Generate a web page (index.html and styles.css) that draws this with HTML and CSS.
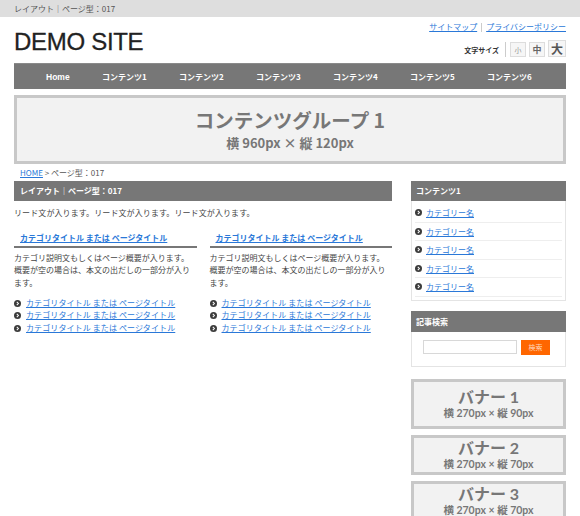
FILE: index.html
```html
<!DOCTYPE html>
<html lang="ja">
<head>
<meta charset="utf-8">
<title>DEMO SITE</title>
<link rel="stylesheet" href="styles.css">
</head>
<body>
<div class="topbar">レイアウト｜ページ型：017</div>

<header class="header">
  <h1 class="logo">DEMO SITE</h1>
  <div class="header-right">
    <div class="util-links">
      <a href="#">サイトマップ</a><span class="util-sep"></span><a href="#">プライバシーポリシー</a>
    </div>
    <div class="fontsize">
      <span class="fontsize-label">文字サイズ</span>
      <span class="fontsize-sep"></span>
      <span class="fs-btn fs-s">小</span>
      <span class="fs-btn fs-m">中</span>
      <span class="fs-btn fs-l">大</span>
    </div>
  </div>
</header>

<nav class="gnav">
  <a href="#">Home</a>
  <a href="#">コンテンツ1</a>
  <a href="#">コンテンツ2</a>
  <a href="#">コンテンツ3</a>
  <a href="#">コンテンツ4</a>
  <a href="#">コンテンツ5</a>
  <a href="#">コンテンツ6</a>
</nav>

<div class="hero">
  <div class="hero-title">コンテンツグループ 1</div>
  <div class="hero-sub">横 960px × 縦 120px</div>
</div>

<div class="breadcrumb"><a href="#">HOME</a> &gt; ページ型：017</div>

<div class="main">
  <div class="content">
    <h2 class="content-head">レイアウト｜ページ型：017</h2>
    <p class="lead">リード文が入ります。リード文が入ります。リード文が入ります。</p>
    <div class="cols">
      <div class="col">
        <h3 class="col-title"><a href="#">カテゴリタイトル または ページタイトル</a></h3>
        <p class="col-desc">カテゴリ説明文もしくはページ概要が入ります。概要が空の場合は、本文の出だしの一部分が入ります。</p>
        <ul class="col-list">
          <li><svg class="arrow" viewBox="0 0 8 8"><circle cx="4" cy="4" r="4"/><path d="M3.2 2.2 L5 4 L3.2 5.8"/></svg><a href="#">カテゴリタイトル または ページタイトル</a></li>
          <li><svg class="arrow" viewBox="0 0 8 8"><circle cx="4" cy="4" r="4"/><path d="M3.2 2.2 L5 4 L3.2 5.8"/></svg><a href="#">カテゴリタイトル または ページタイトル</a></li>
          <li><svg class="arrow" viewBox="0 0 8 8"><circle cx="4" cy="4" r="4"/><path d="M3.2 2.2 L5 4 L3.2 5.8"/></svg><a href="#">カテゴリタイトル または ページタイトル</a></li>
        </ul>
      </div>
      <div class="col">
        <h3 class="col-title"><a href="#">カテゴリタイトル または ページタイトル</a></h3>
        <p class="col-desc">カテゴリ説明文もしくはページ概要が入ります。概要が空の場合は、本文の出だしの一部分が入ります。</p>
        <ul class="col-list">
          <li><svg class="arrow" viewBox="0 0 8 8"><circle cx="4" cy="4" r="4"/><path d="M3.2 2.2 L5 4 L3.2 5.8"/></svg><a href="#">カテゴリタイトル または ページタイトル</a></li>
          <li><svg class="arrow" viewBox="0 0 8 8"><circle cx="4" cy="4" r="4"/><path d="M3.2 2.2 L5 4 L3.2 5.8"/></svg><a href="#">カテゴリタイトル または ページタイトル</a></li>
          <li><svg class="arrow" viewBox="0 0 8 8"><circle cx="4" cy="4" r="4"/><path d="M3.2 2.2 L5 4 L3.2 5.8"/></svg><a href="#">カテゴリタイトル または ページタイトル</a></li>
        </ul>
      </div>
    </div>
  </div>

  <aside class="sidebar">
    <div class="side-box">
      <h3 class="side-head">コンテンツ1</h3>
      <ul class="side-list">
        <li><svg class="arrow" viewBox="0 0 8 8"><circle cx="4" cy="4" r="4"/><path d="M3.2 2.2 L5 4 L3.2 5.8"/></svg><a href="#">カテゴリー名</a></li>
        <li><svg class="arrow" viewBox="0 0 8 8"><circle cx="4" cy="4" r="4"/><path d="M3.2 2.2 L5 4 L3.2 5.8"/></svg><a href="#">カテゴリー名</a></li>
        <li><svg class="arrow" viewBox="0 0 8 8"><circle cx="4" cy="4" r="4"/><path d="M3.2 2.2 L5 4 L3.2 5.8"/></svg><a href="#">カテゴリー名</a></li>
        <li><svg class="arrow" viewBox="0 0 8 8"><circle cx="4" cy="4" r="4"/><path d="M3.2 2.2 L5 4 L3.2 5.8"/></svg><a href="#">カテゴリー名</a></li>
        <li><svg class="arrow" viewBox="0 0 8 8"><circle cx="4" cy="4" r="4"/><path d="M3.2 2.2 L5 4 L3.2 5.8"/></svg><a href="#">カテゴリー名</a></li>
      </ul>
    </div>

    <div class="side-box search-box">
      <h3 class="side-head">記事検索</h3>
      <div class="search-body">
        <input class="search-input" type="text">
        <button class="search-btn">検索</button>
      </div>
    </div>

    <div class="banner banner-tall">
      <div class="banner-title">バナー 1</div>
      <div class="banner-sub">横 270px × 縦 90px</div>
    </div>
    <div class="banner">
      <div class="banner-title">バナー 2</div>
      <div class="banner-sub">横 270px × 縦 70px</div>
    </div>
    <div class="banner">
      <div class="banner-title">バナー 3</div>
      <div class="banner-sub">横 270px × 縦 70px</div>
    </div>
  </aside>
</div>
</body>
</html>
```
FILE: styles.css
```css
* { box-sizing: border-box; }
html, body { margin: 0; padding: 0; }
body {
  font-family: "Noto Sans CJK JP", "Noto Sans", sans-serif;
  font-size: 8px;
  color: #444;
  background: #fff;
  overflow: hidden;
}
a { color: #2a78d8; text-decoration: underline; }
h1, h2, h3, p, ul { margin: 0; padding: 0; }
ul { list-style: none; }

.topbar {
  height: 17px;
  line-height: 17px;
  background: #dedede;
  padding-left: 14px;
  font-size: 8px;
  color: #555;
}

.header {
  height: 46px;
  padding: 0 14px;
  display: flex;
  justify-content: space-between;
}
.logo {
  font-family: "Liberation Sans", Arial, sans-serif;
  font-weight: normal;
  font-size: 24px;
  line-height: 28px;
  padding-top: 11px;
  color: #222;
  letter-spacing: -0.3px;
  -webkit-text-stroke: 0.3px #222;
}
.header-right {
  display: flex;
  flex-direction: column;
  align-items: flex-end;
}
.util-links {
  margin-top: 5px;
  line-height: 10px;
  font-size: 8px;
  display: flex;
  align-items: center;
}
.util-sep {
  display: inline-block;
  width: 1px;
  height: 9px;
  background: #ccc;
  margin: 0 4px;
}
.fontsize {
  margin-top: 8px;
  display: flex;
  align-items: flex-end;
}
.fontsize-label {
  font-size: 7px;
  font-weight: bold;
  color: #333;
  line-height: 14px;
  margin-right: 6px;
}
.fontsize-sep {
  width: 1px;
  height: 15px;
  background: #ccc;
  margin-right: 4px;
}
.fs-btn {
  display: flex;
  align-items: center;
  justify-content: center;
  width: 16px;
  height: 15px;
  border: 1px solid #ddd;
  background: #f6f6f6;
  color: #666;
  margin-left: 3px;
  font-weight: bold;
}
.fs-s { font-size: 7px; margin-left: 0; color: #999; font-weight: normal; }
.fs-m { font-size: 9px; }
.fs-l { font-size: 12px; width: 18px; height: 17px; color: #555; }

.gnav {
  margin: 0 14px;
  height: 26px;
  background: #777;
  border-top: 1px solid #8a8a8a;
  display: flex;
  align-items: center;
  padding-left: 32px;
  gap: 32.3px;
}
.gnav a {
  color: #fff;
  text-decoration: none;
  font-weight: bold;
  font-size: 8px;
}
.gnav a:first-child {
  font-family: "Liberation Sans", Arial, sans-serif;
  font-size: 8.5px;
}

.hero {
  margin: 6px 14px 0;
  height: 69px;
  border: 3px solid #c8c8c8;
  background: #f2f2f2;
  display: flex;
  flex-direction: column;
  align-items: center;
  justify-content: center;
  color: #777;
  font-weight: bold;
}
.hero-title {
  font-size: 19.5px;
  line-height: 26px;
}
.hero-sub {
  font-size: 13px;
  line-height: 20px;
}

.breadcrumb {
  height: 17px;
  line-height: 17px;
  padding-left: 20px;
  color: #555;
}

.main {
  display: flex;
  padding: 0 14px;
  gap: 19px;
}
.content { width: 378px; }
.sidebar { width: 155px; }

.content-head {
  height: 20px;
  line-height: 20px;
  background: #777;
  color: #fff;
  font-size: 8px;
  font-weight: bold;
  padding-left: 6px;
}
.lead {
  margin-top: 6px;
  line-height: 12px;
  color: #444;
  letter-spacing: 0.1px;
}
.cols {
  margin-top: 7px;
  display: flex;
  gap: 13px;
}
.col { width: 182.5px; }
.col-title {
  font-size: 8px;
  font-weight: bold;
  line-height: 12px;
  padding: 6px 6px 2px;
  border-bottom: 2px solid #777;
}
.col-desc {
  margin-top: 4px;
  line-height: 12.3px;
  color: #444;
}
.col-list {
  margin-top: 8px;
}
.col-list li {
  height: 12.5px;
  line-height: 12.5px;
  display: flex;
  align-items: center;
  letter-spacing: 0.1px;
}
.arrow {
  width: 7px;
  height: 7px;
  margin-right: 5px;
  flex: none;
}
.arrow circle { fill: #3c3c3c; }
.arrow path { fill: none; stroke: #fff; stroke-width: 1.2; }

.side-box {
  border: 1px solid #e4e4e4;
  border-top: none;
}
.side-head {
  height: 20px;
  line-height: 20px;
  background: #777;
  color: #fff;
  font-size: 8px;
  font-weight: bold;
  padding-left: 5px;
  margin: 0 -1px;
}
.side-list {
  padding: 3px 3px 3px;
}
.side-list li {
  height: 18.5px;
  border-bottom: 1px solid #eee;
  display: flex;
  align-items: center;
}
.side-list .arrow { margin-right: 4px; }

.search-box { margin-top: 10px; }
.search-box .side-head { height: 21px; line-height: 21px; }
.search-body {
  padding: 8px 0 11px 11px;
  display: flex;
  gap: 4px;
}
.search-input {
  width: 94px;
  height: 14px;
  border: 1px solid #d8d8d8;
  margin: 0;
  padding: 0;
  background: #fff;
}
.search-btn {
  width: 29px;
  height: 15px;
  border: none;
  margin: 0;
  padding: 0;
  background: #ff6600;
  color: #ffd9bf;
  font-family: "Noto Sans CJK JP", sans-serif;
  font-size: 7px;
}

.banner {
  margin-top: 6.3px;
  height: 40px;
  border: 3px solid #c8c8c8;
  background: #f2f2f2;
  display: flex;
  flex-direction: column;
  align-items: center;
  justify-content: center;
  color: #777;
  font-weight: bold;
  font-family: Lato, "Noto Sans CJK JP", sans-serif;
}
.banner-tall {
  margin-top: 12px;
  height: 50px;
}
.banner-title {
  font-size: 16px;
  line-height: 18px;
}
.banner-sub {
  font-size: 10.5px;
  line-height: 14px;
}
```
